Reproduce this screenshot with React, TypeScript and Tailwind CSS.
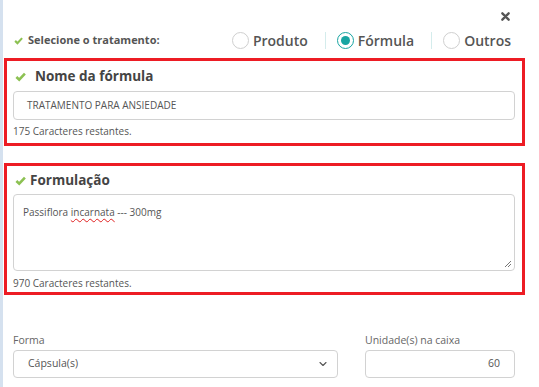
import { ChevronDown } from 'lucide-react'

function Check({ size = 10 }: { size?: number }) {
  return (
    <svg width={size} height={size} viewBox="0 0 12 12" className="shrink-0">
      <path d="M1.5 6.5 4.6 9.5 10.8 2.8" fill="none" stroke="#8cc152" strokeWidth="2.8" strokeLinejoin="miter" />
    </svg>
  )
}

function Radio({ label, checked }: { label: string; checked?: boolean }) {
  return (
    <label className="flex items-center gap-[4px]">
      <span
        className={
          'flex h-[17px] w-[17px] items-center justify-center rounded-full border ' +
          (checked ? 'border-[#17a5a2]' : 'border-[#cfcfcf]')
        }
      >
        {checked && <span className="h-[9px] w-[9px] rounded-full bg-[#17a5a2]" />}
      </span>
      <span className="text-[14px] font-semibold text-[#555]">{label}</span>
    </label>
  )
}

function Sep() {
  return <span className="h-[17px] w-px bg-[#d4ecec]" />
}

export default function App() {
  return (
    <div
      className="flex h-[387px] w-[539px] overflow-hidden bg-white text-[#555]"
      style={{ fontFamily: '"Open Sans", "Liberation Sans", sans-serif' }}
    >
      <div className="w-[3px] shrink-0 bg-[#d5e1ef]" />
      <div className="flex-1">
        <div className="flex h-[21px] items-end justify-end pr-[29px]">
          <svg width="9" height="9" viewBox="0 0 10 10">
            <path d="M1.5 1.5 8.5 8.5M8.5 1.5 1.5 8.5" stroke="#555" strokeWidth="2.6" strokeLinecap="round" />
          </svg>
        </div>

        <div className="mt-[10px] flex h-[18px] items-center pl-[11px] pr-[28px]">
          <Check size={9} />
          <span className="ml-[5px] text-[11px] font-bold text-[#555]">Selecione o tratamento:</span>
          <div className="ml-auto flex items-center">
            <Radio label="Produto" />
            <span className="ml-[17px] mr-[11px] flex"><Sep /></span>
            <Radio label="Fórmula" checked />
            <span className="ml-[17px] mr-[11px] flex"><Sep /></span>
            <Radio label="Outros" />
          </div>
        </div>

        <div className="ml-[1px] mt-[9px] w-[521px] border-[3px] border-[#ed1c24] pb-[4px] pl-[6px] pr-[6px] pt-[5px]">
          <div className="flex h-[20px] items-center pl-[2px]">
            <Check size={11} />
            <span className="ml-[9px] text-[13.5px] font-bold text-[#444]">Nome da fórmula</span>
          </div>
          <div className="mt-[5px] flex h-[29px] w-[502px] items-center rounded-[4px] border border-[#d2d2d2] pl-[13px] text-[10px] text-[#555]">
            TRATAMENTO PARA ANSIEDADE
          </div>
          <div className="mt-[3px] h-[16px] text-[10px] leading-[16px] text-[#555]">175 Caracteres restantes.</div>
        </div>

        <div className="ml-[1px] mt-[17px] w-[521px] border-[3px] border-[#ed1c24] pb-[1px] pl-[6px] pr-[6px] pt-[4px]">
          <div className="flex h-[20px] items-center pl-[2px]">
            <Check size={11} />
            <span className="ml-[4px] text-[13.5px] font-bold text-[#444]">Formulação</span>
          </div>
          <div className="relative mt-[4px] h-[77px] w-[502px] rounded-[4px] border border-[#d2d2d2] pl-[9px] pt-[8px] text-[10px] leading-[18px] text-[#555]">
            Passiflora{' '}
            <span className="underline decoration-[#e02020] decoration-wavy decoration-1 underline-offset-2">incarnata</span>{' '}
            --- 300mg
            <svg className="absolute bottom-[2px] right-[2px]" width="8" height="8" viewBox="0 0 8 8">
              <path d="M7 1 1 7M7 4 4 7" stroke="#777" strokeWidth="1" />
            </svg>
          </div>
          <div className="mt-[4px] h-[16px] text-[10px] leading-[16px] text-[#555]">970 Caracteres restantes.</div>
        </div>

        <div className="mt-[37px] flex pl-[10px]">
          <div className="w-[325px]">
            <div className="h-[16px] text-[10.5px] leading-[16px] text-[#666]">Forma</div>
            <div className="mt-[2px] flex h-[28px] items-center justify-between rounded-[4px] border border-[#d2d2d2] pl-[14px] pr-[8px] text-[10.5px] text-[#555]">
              Cápsula(s)
              <ChevronDown size={12} strokeWidth={2.2} className="text-[#555]" />
            </div>
          </div>
          <div className="ml-[27px] w-[150px]">
            <div className="h-[16px] text-[10.5px] leading-[16px] text-[#666]">Unidade(s) na caixa</div>
            <div className="mt-[2px] flex h-[28px] items-center justify-end rounded-[4px] border border-[#d2d2d2] pr-[14px] text-[10.5px] text-[#555]">
              60
            </div>
          </div>
        </div>
      </div>
    </div>
  )
}
